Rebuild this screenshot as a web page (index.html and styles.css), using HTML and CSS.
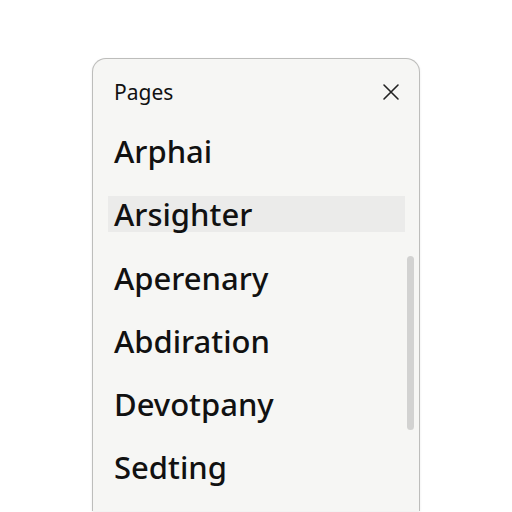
FILE: index.html
```html
<!DOCTYPE html>
<html>
<head>
<meta charset="utf-8">
<link rel="stylesheet" href="styles.css">
</head>
<body>
<div class="panel">
  <div class="header">
    <span class="title">Pages</span>
    <svg class="close" width="18" height="18" viewBox="0 0 18 18"><path d="M2 2 L16 16 M16 2 L2 16" stroke="#222" stroke-width="1.6" fill="none" stroke-linecap="round"/></svg>
  </div>
  <ul class="list">
    <li class="item">Arphai</li>
    <li class="item selected">Arsighter</li>
    <li class="item">Aperenary</li>
    <li class="item">Abdiration</li>
    <li class="item">Devotpany</li>
    <li class="item">Sedting</li>
  </ul>
  <div class="scrollbar"></div>
</div>
</body>
</html>
```
FILE: styles.css
```css
html, body {
  margin: 0;
  padding: 0;
  background: #ffffff;
}
body {
  width: 512px;
  height: 512px;
  overflow: hidden;
  font-family: "Noto Sans", "Open Sans", sans-serif;
  color: #111;
}
.panel {
  position: relative;
  margin: 58px 0 0 92px;
  width: 326px;
  height: 452px;
  background: #f6f6f4;
  border: 1.5px solid #bdbdbb;
  border-bottom: none;
  border-radius: 14px 14px 0 0;
  box-shadow: 0 1px 3px rgba(0,0,0,0.08);
  overflow: hidden;
}
.header {
  display: flex;
  align-items: center;
  justify-content: space-between;
  padding: 19px 19px 0 21px;
  height: 28px;
}
.title {
  font-size: 21px;
  font-weight: 400;
}
.close {
  display: block;
}
.list {
  list-style: none;
  margin: 0;
  padding: 27px 14px 0 15px;
  display: flex;
  flex-direction: column;
  gap: 27.3px;
}
.item {
  height: 36px;
  line-height: 36px;
  padding-left: 6px;
  font-size: 31px;
  font-weight: 500;
  letter-spacing: 0;
}
.item.selected {
  background: #ebebea;
}
.scrollbar {
  position: absolute;
  right: 5px;
  top: 197px;
  width: 7px;
  height: 174px;
  background: #d2d2d1;
  border-radius: 4px;
}
```
